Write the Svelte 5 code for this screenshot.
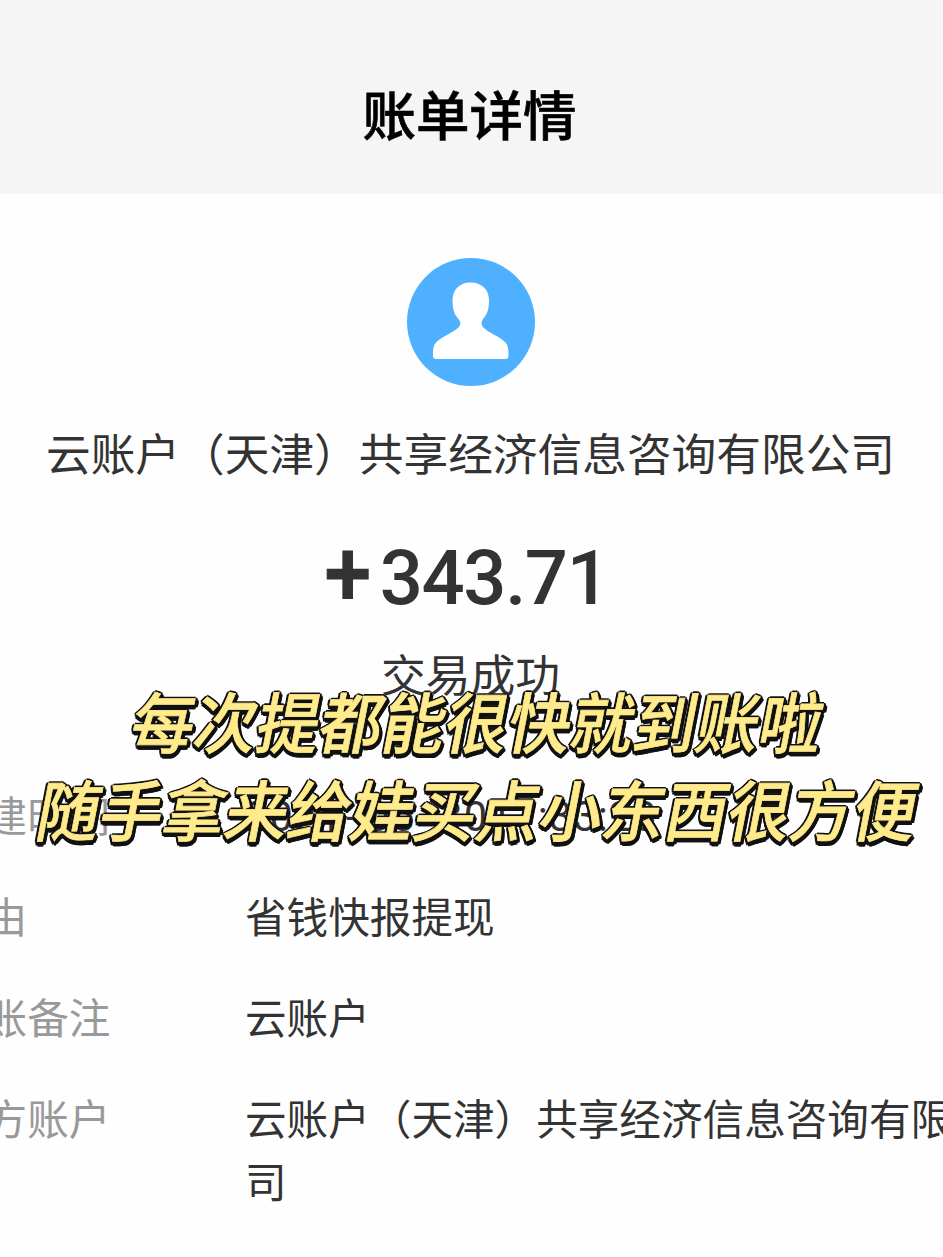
<script>
	const title = '账单详情';
	const company = '云账户（天津）共享经济信息咨询有限公司';

	const created = { date: ['2021', '05', '30'], time: '11:33:20' };

	const rows = [
		{ label: '理由', value: '省钱快报提现' },
		{ label: '转账备注', value: '云账户' },
		{ label: '对方账户', value: company }
	];

	const caption = ['每次提都能很快就到账啦', '随手拿来给娃买点小东西很方便'];
</script>

<div class="page">
	<header>
		<h1>{title}</h1>
	</header>

	<main>
		<svg class="avatar" viewBox="0 0 128 128">
			<circle cx="64" cy="64" r="64" fill="#4fb0ff" />
			<path
				fill="#fff"
				d="M63.5 24.5C75 24.5 82 32 82 42C82 51 80.500 56 76 61C74 64 74 67 77 70C82 75 92 78 98 84C101 87 101.500 90 101.500 98C101.500 100 100.500 101 98.500 101H29C27 101 26 100 26 98C26 90 26.500 87 29.500 84C36 78 45 75 51 70C54 67 54 64 51.500 61C47 56 45.500 51 45.500 42C45.500 32 52.500 24.500 63.500 24.500Z"
			/>
		</svg>
		<p class="company">{company}</p>
		<p class="amount"><span class="plus">+</span><span>343.71</span></p>
		<p class="status">交易成功</p>

		<dl>
			<div class="row">
				<dt>创建时间</dt>
				<dd class="created">
					<span>
						{#each created.date as part, i}{#if i > 0}<span class="dash">-</span>{/if}{part}{/each}
					</span>
					<span>{created.time}</span>
				</dd>
			</div>
			{#each rows as row}
				<div class="row">
					<dt>{row.label}</dt>
					<dd>{row.value}</dd>
				</div>
			{/each}
		</dl>
	</main>

	<div class="caption">
		{#each caption as line}
			<p>{line}</p>
		{/each}
	</div>
</div>

<style>
	:global(body) {
		background: #fefefe;
	}

	.page {
		position: relative;
		width: 943px;
		height: 1257px;
		overflow: hidden;
		background: #fefefe;
		color: #333;
		font-family: 'Noto Sans CJK SC', 'Noto Sans', sans-serif;
	}

	h1,
	p,
	dl,
	dt,
	dd {
		margin: 0;
	}

	header {
		height: 194px;
		box-sizing: border-box;
		padding: 73px 4px 0 0;
		background: #f5f5f5;
		text-align: center;
	}

	h1 {
		color: #000;
		font-size: 53.5px;
		font-weight: 500;
		line-height: 80px;
		-webkit-text-stroke: 0.6px #000;
	}

	main {
		display: flex;
		flex-direction: column;
		align-items: center;
		padding: 64px 2px 0 0;
	}

	.avatar {
		width: 128px;
		height: 128px;
	}

	.company {
		margin-top: 34px;
		font-size: 44.7px;
		line-height: 64px;
		white-space: nowrap;
	}

	.amount {
		display: flex;
		margin: 44px 8px 0 0;
		font-family: Roboto, sans-serif;
		font-size: 76px;
		font-weight: 500;
		letter-spacing: -1.4px;
		line-height: 100px;
	}

	.plus {
		margin: -3px 10px 3px 0;
		font-size: 84px;
		-webkit-text-stroke: 1px #333;
		transform: scaleY(1.07);
	}

	.status {
		margin-top: 13px;
		font-size: 44.8px;
		line-height: 64px;
	}

	dl {
		align-self: stretch;
		margin: 78px 0 0 -56px;
	}

	.row {
		display: flex;
		margin-bottom: 38px;
		font-size: 41.6px;
		line-height: 63px;
	}

	dt {
		flex: none;
		width: 301px;
		color: #999;
	}

	dd {
		flex: none;
		width: 765px;
	}

	.created {
		display: flex;
		gap: 1px;
		height: 61px;
		padding-top: 2px;
		font-family: Roboto, sans-serif;
		letter-spacing: 1px;
	}

	.dash {
		display: inline-block;
		width: 24px;
		text-align: center;
		transform: scaleX(1.5);
	}

	.caption {
		position: absolute;
		top: 676px;
		left: 7px;
		width: 943px;
		color: #ffeb8b;
		font-size: 62.8px;
		font-weight: 500;
		line-height: 88px;
		text-align: center;
		white-space: nowrap;
		-webkit-text-stroke: 0.7px #ffeb8b;
		text-shadow:
			-2.4px 0 #111,
			2.4px 0 #111,
			0 -2.4px #111,
			0 2.4px #111,
			-1.7px -1.7px #111,
			1.7px -1.7px #111,
			-1.7px 1.7px #111,
			1.7px 1.7px #111,
			-1px 3.5px #111,
			1px 4px #111,
			3px 1px #111,
			4px 2px #111,
			3px 3px #111,
			2px 4px #111,
			4px 3px #111;
	}

	.caption p {
		transform: skewX(-11deg) scaleY(1.05);
	}
</style>
